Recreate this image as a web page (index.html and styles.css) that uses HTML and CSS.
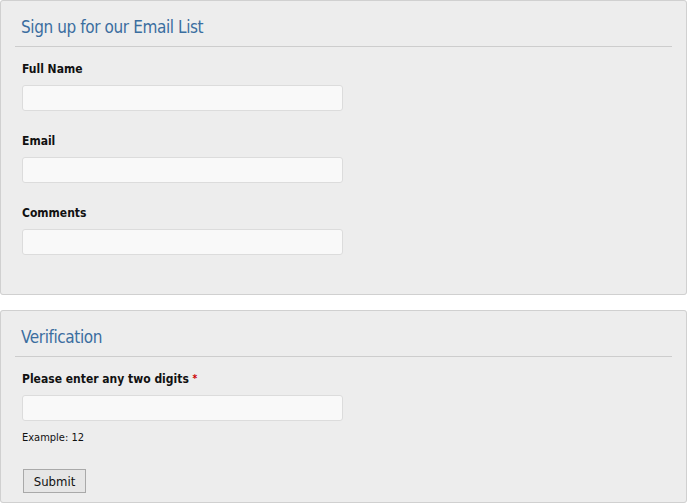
FILE: index.html
```html
<!DOCTYPE html>
<html>
<head>
<meta charset="utf-8">
<link rel="stylesheet" href="styles.css">
</head>
<body>
<form class="form">
  <fieldset class="panel panel-first">
    <h2 class="panel-title">Sign up for our Email List</h2>
    <div class="field">
      <label class="label">Full Name</label>
      <input class="input" type="text">
    </div>
    <div class="field">
      <label class="label">Email</label>
      <input class="input" type="text">
    </div>
    <div class="field">
      <label class="label">Comments</label>
      <input class="input" type="text">
    </div>
  </fieldset>
  <fieldset class="panel panel-second">
    <h2 class="panel-title">Verification</h2>
    <div class="field">
      <label class="label">Please enter any two digits <span class="req">*</span></label>
      <input class="input" type="text">
      <div class="hint">Example: 12</div>
    </div>
    <button class="submit" type="button">Submit</button>
  </fieldset>
</form>
</body>
</html>
```
FILE: styles.css
```css
* { box-sizing: border-box; }
body {
  margin: 0;
  background: #fff;
  font-family: "Liberation Sans", Arial, sans-serif;
  color: #111;
}
.form {
  display: flex;
  flex-direction: column;
  gap: 15px;
}
.panel {
  margin: 0;
  border: 1px solid #d0d0d0;
  border-radius: 3px;
  background: #ededed;
  padding: 0 14px 0 14px;
  min-width: 0;
}
.panel-first { height: 295px; }
.panel-second { height: 193px; }
.panel-title {
  margin: 0;
  padding: 15px 0 8px 6px;
  border-bottom: 1px solid #cdcdcd;
  font-family: "DejaVu Sans Condensed", "Liberation Sans", sans-serif;
  font-weight: normal;
  font-size: 17px;
  letter-spacing: -0.4px;
  line-height: 22px;
  color: #3b6ea0;
}
.field {
  padding-left: 7px;
  padding-top: 14px;
}
.panel-first .field + .field { padding-top: 22px; }
.label {
  display: block;
  font-family: "DejaVu Sans Condensed", "Liberation Sans", sans-serif;
  font-weight: bold;
  font-size: 12px;
  line-height: 16px;
  margin-bottom: 8px;
}
.req { color: #c00; font-size: 10px; vertical-align: top; }
.input {
  display: block;
  width: 321px;
  height: 26px;
  border: 1px solid #dcdcdc;
  border-radius: 3px;
  background: #f9f9f9;
  margin: 0;
}
.hint {
  font-family: "DejaVu Sans Condensed", "Liberation Sans", sans-serif;
  font-size: 11px;
  margin-top: 10px;
  line-height: 14px;
}
.submit {
  margin: 24px 0 0 8px;
  width: 63px;
  height: 24px;
  border: 1px solid #a9a9a9;
  background: #e6e6e6;
  font-family: "DejaVu Sans Condensed", "Liberation Sans", sans-serif;
  font-size: 13px;
  color: #111;
  padding: 0;
}
```
